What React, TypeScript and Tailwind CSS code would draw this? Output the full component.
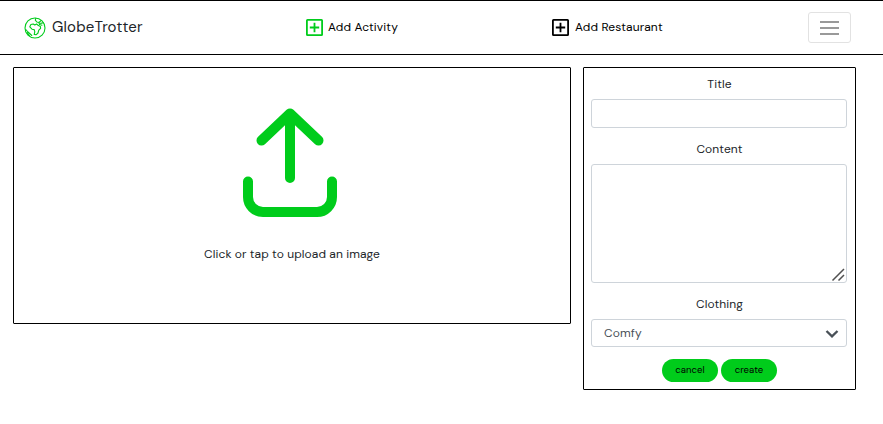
import React from "react";

function GlobeIcon() {
  return (
    <svg viewBox="0 0 22 22" className="h-[22px] w-[22px]" fill="none" stroke="#00cc1b" strokeWidth="1.1" strokeLinejoin="round" strokeLinecap="round">
      <circle cx="11" cy="11" r="10" />
      <path d="M5.8 9.8 6.9 7.5 9.2 7 10.8 8 12.6 7 14.4 8.6 16.4 9.4 16.6 11.4 14.8 13.2 14 16 12 17.8 10.2 17.4 10.8 14.8 10.2 12.6 8 12.2Z" />
      <path d="M11.8 1.4 11.3 3.2 12.8 5 15 5.5 15.5 7.5 18 8.2M15 5.5 17 3.7M16.6 6.4 19.4 5.8M1.8 12.5 4 15 7.8 18.5M3 15.6 5.4 18.6" />
    </svg>
  );
}

function PlusSquare({ color }: { color: string }) {
  return (
    <svg viewBox="0 0 17 17" className="h-[17px] w-[17px]" fill="none" stroke={color}>
      <rect x="0.9" y="0.9" width="15.2" height="15.2" rx="0.6" strokeWidth="1.8" />
      <path d="M8.5 3.8v9.4M3.8 8.5h9.4" strokeWidth="1.8" />
    </svg>
  );
}

function UploadIcon() {
  return (
    <svg viewBox="0 0 94 109" className="mr-1 h-[109px] w-[94px]" fill="none" stroke="#00cc1b" strokeWidth="10" strokeLinecap="round" strokeLinejoin="round">
      <path d="M47 70V6M18.5 32.5 47 5.5 75.5 32.5" />
      <path d="M5 73.5V89a15 15 0 0 0 15 15H74a15 15 0 0 0 15-15V73.5" />
    </svg>
  );
}

export default function App() {
  return (
    <div className="h-[424px] w-[883px] overflow-hidden bg-white font-['DM_Sans','Inter',sans-serif] text-xs tracking-[0.09px] text-[#212529]">
      <nav className="flex h-[55px] items-center border-y border-black">
        <a className="ml-6 flex w-[282px] items-center gap-[6px]">
          <GlobeIcon />
          <span className="-mt-px text-[15px] leading-5 tracking-[0.18px]">GlobeTrotter</span>
        </a>
        <a className="flex w-[246px] items-center gap-[5px] text-black">
          <PlusSquare color="#00cc1b" />
          <span className="-mt-px tracking-[0.13px]">Add Activity</span>
        </a>
        <a className="flex w-[256px] items-center gap-[6px] text-black">
          <PlusSquare color="#000000" />
          <span className="-mt-px tracking-[0.13px]">Add Restaurant</span>
        </a>
        <button aria-label="Menu" className="flex h-[31px] w-[43px] flex-col items-center justify-center gap-1 rounded-[3px] border border-[#e2e2e2]">
          <span className="h-0.5 w-[19px] bg-[#999999]" />
          <span className="h-0.5 w-[19px] bg-[#999999]" />
          <span className="h-0.5 w-[19px] bg-[#999999]" />
        </button>
      </nav>
      <main className="flex items-start gap-3 pt-3 pl-[13px]">
        <section className="flex h-[257px] w-[558px] flex-col items-center rounded-[1px] border border-black pt-10">
          <UploadIcon />
          <p className="mt-[29px] leading-4">Click or tap to upload an image</p>
        </section>
        <form className="flex h-[323px] w-[273px] flex-col rounded-[1px] border border-black pt-2 pr-2 pl-[7px]">
          <label className="pl-px text-center leading-4">Title</label>
          <input className="mt-[7px] h-[29px] w-full rounded-[3px] border border-[#ced4da]" />
          <label className="mt-[13px] pl-px text-center leading-4">Content</label>
          <div className="mt-[7px] flex h-[119px] shrink-0 items-end justify-end rounded-[3px] border border-[#ced4da]">
            <svg viewBox="0 0 14 14" className="mr-px h-[14px] w-[14px]" fill="none" stroke="#505050" strokeWidth="1.5">
              <path d="M1.5 12.5 13 1M7.5 12.5 13 7" />
            </svg>
          </div>
          <label className="mt-[13px] pl-px text-center leading-4">Clothing</label>
          <div className="mt-[7px] flex h-[28px] items-center justify-between rounded-[3px] border border-[#ced4da] pr-[7px] pl-3 text-[#495057]">
            <span className="tracking-[0.15px]">Comfy</span>
            <svg viewBox="0 0 14 8" className="mt-px h-2 w-[14px]" fill="none" stroke="#495057" strokeWidth="2.3">
              <path d="M1.5 1 7 6.4 12.5 1" />
            </svg>
          </div>
          <div className="ml-px mt-3 flex justify-center gap-[3px] text-[9.5px] text-black">
            <button type="button" className="h-[23px] w-14 rounded-full bg-[#00cc1b] pb-px">cancel</button>
            <button type="button" className="h-[23px] w-14 rounded-full bg-[#00cc1b] pb-px">create</button>
          </div>
        </form>
      </main>
    </div>
  );
}
